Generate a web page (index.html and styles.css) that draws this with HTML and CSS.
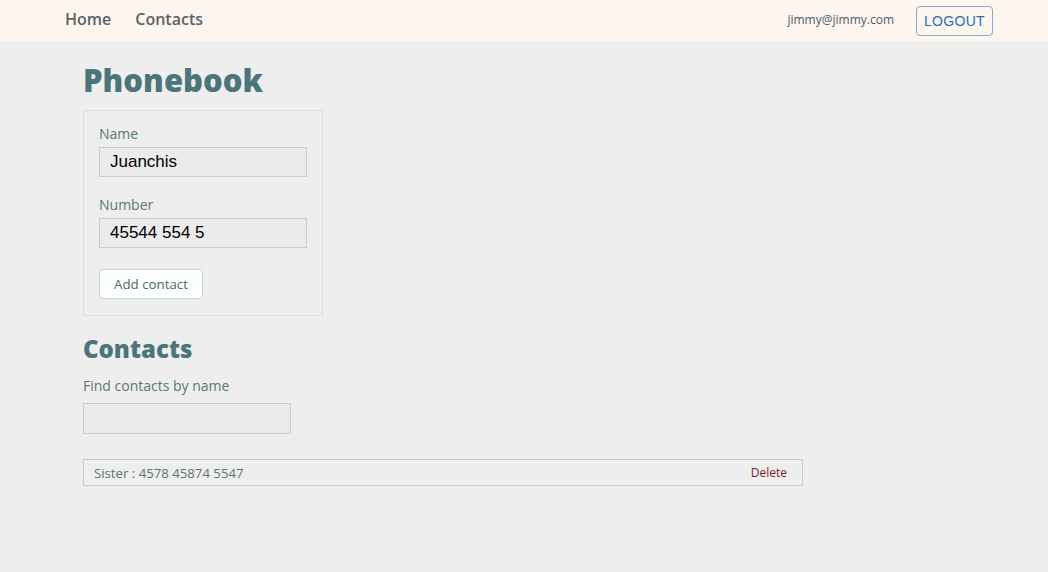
FILE: index.html
```html
<!DOCTYPE html>
<html>
<head>
<meta charset="utf-8">
<link rel="stylesheet" href="styles.css">
</head>
<body>
<header class="nav">
  <div class="nav-links">
    <a class="nav-link" href="#">Home</a>
    <a class="nav-link" href="#">Contacts</a>
  </div>
  <div class="nav-user">
    <span class="email">jimmy@jimmy.com</span>
    <button class="logout">LOGOUT</button>
  </div>
</header>
<main class="main">
  <h1 class="title">Phonebook</h1>
  <form class="form-box">
    <label class="field">
      <span class="label">Name</span>
      <input class="input" type="text" value="Juanchis">
    </label>
    <label class="field">
      <span class="label">Number</span>
      <input class="input" type="text" value="45544 554 5">
    </label>
    <button class="add-btn" type="button">Add contact</button>
  </form>
  <h2 class="subtitle">Contacts</h2>
  <label class="filter">
    <span class="label">Find contacts by name</span>
    <input class="input filter-input" type="text">
  </label>
  <ul class="list">
    <li class="item"><span>Sister : 4578 45874 5547</span><button class="del">Delete</button></li>
  </ul>
</main>
</body>
</html>
```
FILE: styles.css
```css
* { box-sizing: border-box; }
html, body { margin: 0; padding: 0; }
body {
  background: #eeeeee;
  font-family: "Open Sans", "Noto Sans", sans-serif;
  width: 1048px;
  height: 572px;
  overflow: hidden;
}
.nav {
  height: 41px;
  background: #fdf6ee;
  display: flex;
  align-items: center;
  justify-content: space-between;
  padding: 0 55px 0 65px;
}
.nav-links { display: flex; gap: 24px; }
.nav-link {
  text-decoration: none;
  color: #5d6167;
  font-size: 16px;
  line-height: 20px;
  font-weight: 600;
  margin-top: -3px;
}
.nav-user { display: flex; align-items: center; gap: 22px; }
.email { font-size: 12px; color: #4e5a63; margin-top: -3px; }
.logout {
  height: 30px;
  width: 77px;
  border: 1px solid #8fa6c4;
  border-radius: 4px;
  background: transparent;
  color: #2a6cc0;
  font-family: "Liberation Sans", Arial, sans-serif;
  font-size: 14px;
  letter-spacing: 0.3px;
  padding: 0;
}
.main { padding: 22px 0 0 83px; }
.title {
  margin: 0 0 13px;
  font-size: 31px;
  line-height: 34px;
  font-weight: 800;
  color: #4a7579;
}
.form-box {
  width: 240px;
  border: 1px solid #dddddd;
  padding: 14px 15px 16px;
  display: flex;
  flex-direction: column;
  align-items: flex-start;
}
.field { display: flex; flex-direction: column; margin-bottom: 19px; }
.label { font-size: 14px; color: #587879; line-height: 18px; margin-bottom: 4px; }
.input {
  width: 208px;
  height: 30px;
  background: #ebebeb;
  border: 1px solid #cccccc;
  padding: 0 10px;
  font-family: "Liberation Sans", Arial, sans-serif;
  font-size: 17px;
  color: #000;
}
.add-btn {
  margin-top: 2px;
  height: 30px;
  width: 104px;
  background: #fbfffe;
  border: 1px solid #cfd3d3;
  border-radius: 4px;
  color: #4d6b6d;
  font-family: "Open Sans", sans-serif;
  font-size: 13.3px;
  padding: 0;
}
.subtitle {
  margin: 19px 0 14px;
  font-size: 24px;
  line-height: 28px;
  font-weight: 800;
  color: #4a7579;
}
.filter { display: flex; flex-direction: column; }
.filter .label { margin-bottom: 8px; }
.filter-input { height: 31px; }
.list { list-style: none; margin: 25px 0 0; padding: 0; }
.item {
  width: 720px;
  height: 27px;
  border: 1px solid #cccccc;
  display: flex;
  align-items: center;
  justify-content: space-between;
  padding: 0 15px 0 10px;
  font-size: 13.2px;
  color: #5f7373;
}
.del {
  background: none;
  border: none;
  padding: 0;
  font-family: "Open Sans", sans-serif;
  font-size: 12px;
  color: #7a1e1e;
}
```
